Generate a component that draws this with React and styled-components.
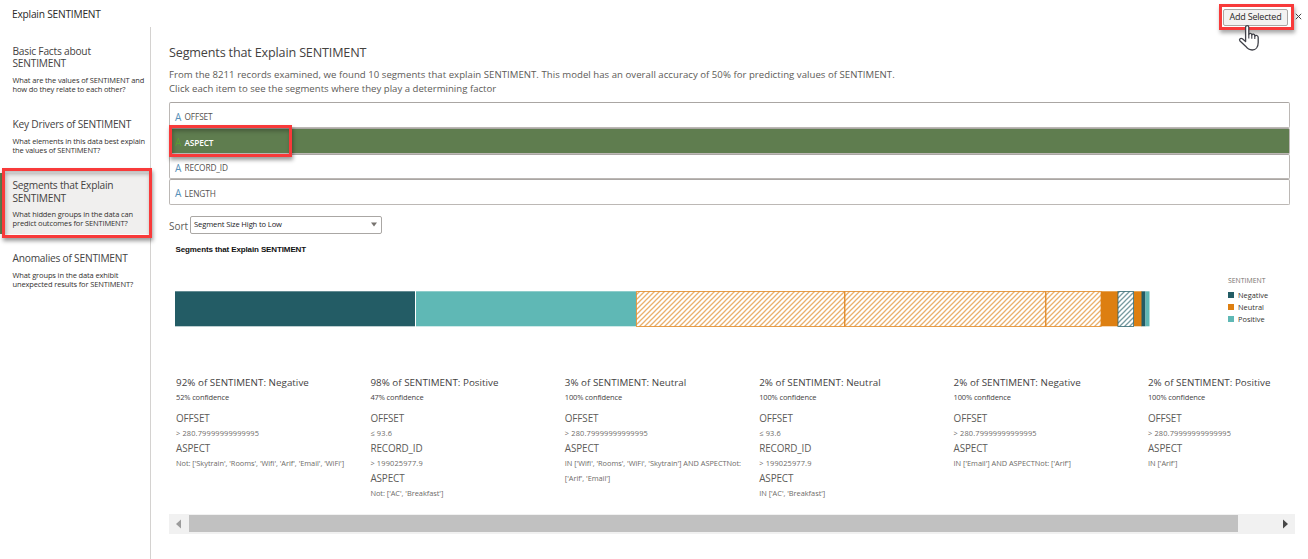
import React from "react";
import styled, { createGlobalStyle, css } from "styled-components";

const Global = createGlobalStyle`
  * { box-sizing: border-box; }
  body { margin: 0; background: #fff; overflow: hidden; }
`;

const C = {
  negative: "#235c65",
  positive: "#5fb8b5",
  neutral: "#dd7f11",
  green: "#5f7d4f",
  ink: "#44423f",
};

const Page = styled.div`
  width: 1308px;
  height: 559px;
  display: flex;
  flex-direction: column;
  font-family: "Open Sans", "Noto Sans", sans-serif;
  color: ${C.ink};
  white-space: nowrap;
  font-kerning: none;
`;

const Header = styled.header`
  height: 27px;
  flex: none;
  display: flex;
  align-items: flex-start;
  justify-content: space-between;
  padding: 0 6px 0 12px;
`;

const PageTitle = styled.h1`
  margin: 6px 0 0;
  font-size: 10.2px;
  font-weight: 400;
  line-height: 16px;
  letter-spacing: -0.22px;
  color: #2b2927;
`;

const Actions = styled.div`
  display: flex;
  align-items: flex-start;
`;

const AddFrame = styled.div`
  position: relative;
  width: 75px;
  height: 26px;
  margin-top: 4px;
  padding: 1.5px 2px 0 1px;
  border: 3px solid #f83a3a;
  box-shadow: 1px 3px 4px rgba(0, 0, 0, 0.35);
`;

const AddButton = styled.button`
  display: block;
  width: 65px;
  height: 17px;
  padding: 0;
  border: 1px solid #aaa7a4;
  border-radius: 2px;
  background: #f3f2f1;
  font: 400 9px/14px "Open Sans", sans-serif;
  letter-spacing: -0.2px;
  color: #2b2927;
`;

const Pointer = styled.svg`
  position: absolute;
  left: 16px;
  top: 17px;
`;

const CloseIcon = styled.svg`
  margin: 13px 0 0 1px;
`;

const Body = styled.div`
  flex: 1;
  display: flex;
  min-height: 0;
`;

const Nav = styled.nav`
  width: 151px;
  flex: none;
  padding-top: 11.6px;
  border-right: 1px solid #d4d2d0;
  display: flex;
  flex-direction: column;
  gap: 12.3px;
`;

const NavItem = styled.div`
  position: relative;
  padding: 6px 0 6px 12.5px;
  ${(p) =>
    p.$active &&
    css`
      background: #f0efee;
      box-shadow: inset 2px 0 ${C.green};
    `}
`;

const NavTitle = styled.div`
  font-size: 10.2px;
  line-height: 12.6px;
  letter-spacing: -0.22px;
  white-space: pre-line;
`;

const NavText = styled.div`
  margin-top: 6px;
  font-size: 7.5px;
  line-height: 9px;
  letter-spacing: -0.13px;
  white-space: pre-line;
  color: #33312f;
`;

const Highlight = styled.div`
  position: absolute;
  left: ${(p) => p.$x}px;
  top: ${(p) => p.$y}px;
  width: ${(p) => p.$w}px;
  height: ${(p) => p.$h}px;
  border: 3px solid #f83a3a;
  z-index: 2;
  box-shadow: 1px 3px 4px rgba(0, 0, 0, 0.4), inset 1px 3px 4px rgba(0, 0, 0, 0.28);
`;

const Main = styled.main`
  flex: 1;
  min-width: 0;
  padding: 17px 13px 0 18px;
`;

const Heading = styled.h2`
  margin: 0;
  font-size: 12.6px;
  font-weight: 400;
  line-height: 18px;
  letter-spacing: -0.16px;
`;

const Intro = styled.p`
  margin: 5.5px 0 0;
  font-size: 9.6px;
  line-height: 14px;
  color: #5d5b58;
`;

const IntroLine = styled.span`
  display: block;
  letter-spacing: ${(p) => p.$ls}px;
`;

const List = styled.div`
  margin-top: 6.9px;
  width: 1121px;
`;

const Row = styled.div`
  position: relative;
  height: 25.6px;
  display: flex;
  align-items: center;
  padding: 3px 0 0 5px;
  gap: 2.5px;
  border: 1px solid #bcb8b5;
  border-top-color: #aaa6a3;
  border-radius: 2px;
  font-size: 8.3px;
  color: #55524f;
  ${(p) =>
    p.$active &&
    css`
      background: ${C.green};
      color: #fff;
      font-weight: 600;
    `}
`;

const TypeMark = styled.span`
  font-size: 10px;
  font-weight: 400;
  width: 7px;
  color: ${(p) => (p.$active ? "#5b9a35" : "#5590b8")};
`;

const RowName = styled.span`
  letter-spacing: ${(p) => (p.$active ? -0.15 : -0.12)}px;
`;

const SortRow = styled.div`
  margin-top: 11px;
  height: 18px;
  display: flex;
  gap: 2px;
`;

const SortLabel = styled.label`
  width: 19px;
  font-size: 10px;
  line-height: 20px;
  color: #5d5b58;
`;

const Select = styled.div`
  width: 192px;
  height: 18px;
  padding: 0 4px 1px 3px;
  display: flex;
  align-items: center;
  justify-content: space-between;
  border: 1px solid #aaa7a4;
  border-radius: 2px;
  font-size: 7.6px;
  letter-spacing: -0.13px;
  color: #22201e;
`;

const ChartTitle = styled.div`
  margin: 10px 0 0 6.5px;
  font: 700 8px/12px "Liberation Sans", Arial, sans-serif;
  letter-spacing: -0.12px;
  color: #111;
`;

const ChartRow = styled.div`
  display: flex;
  height: 98px;
  padding-left: 6px;
`;

const Bar = styled.svg`
  flex: none;
  margin-top: 35px;
`;

const Legend = styled.div`
  margin: 20.5px 0 0 77px;
  font-size: 7.4px;
  color: #33312f;
`;

const LegendTitle = styled.div`
  line-height: 10px;
  height: 13px;
  font-size: 6.9px;
  color: #77736f;
`;

const LegendItem = styled.div`
  display: flex;
  align-items: center;
  height: 12px;
  gap: 4px;
`;

const Swatch = styled.i`
  width: 6px;
  height: 6px;
  background: ${(p) => p.$color};
`;

const Cards = styled.div`
  margin: 22px 0 0 7px;
  height: 138px;
  display: grid;
  grid-template-columns: repeat(6, 194.4px);
`;

const Card = styled.section`
  min-width: 0;
`;

const CardTitle = styled.div`
  font-size: 9.8px;
  line-height: 14px;
  letter-spacing: 0.03px;
`;

const Confidence = styled.div`
  margin-bottom: 6px;
  font-size: 7.5px;
  line-height: 15px;
  letter-spacing: -0.14px;
`;

const Field = styled.div`
  font-size: 9.9px;
  line-height: 15px;
  letter-spacing: -0.1px;
  color: #5d5b58;
`;

const Value = styled.div`
  font-size: 7.4px;
  line-height: 15px;
  letter-spacing: ${(p) => (p.$numeric ? 0.16 : -0.03)}px;
  white-space: pre-line;
  color: #6e6b68;
`;

const Scrollbar = styled.div`
  width: 1126px;
  height: 20px;
  display: flex;
  align-items: center;
  background: #f1f1f1;
`;

const ScrollArrow = styled.svg`
  flex: none;
`;

const Thumb = styled.div`
  width: 1048.5px;
  height: 17px;
  background: #c1c1c1;
`;

const NAV = [
  { t: "Basic Facts about\nSENTIMENT", d: "What are the values of SENTIMENT and\nhow do they relate to each other?" },
  { t: "Key Drivers of SENTIMENT", d: "What elements in this data best explain\nthe values of SENTIMENT?" },
  { t: "Segments that Explain\nSENTIMENT", d: "What hidden groups in the data can\npredict outcomes for SENTIMENT?", active: true },
  { t: "Anomalies of SENTIMENT", d: "What groups in the data exhibit\nunexpected results for SENTIMENT?" },
];

const ROWS = ["OFFSET", "ASPECT", "RECORD_ID", "LENGTH"];

const SEGMENTS = [
  { x: 0, w: 240, c: C.negative },
  { x: 241, w: 220, c: C.positive },
  { x: 461, w: 208.5, c: C.neutral, hatch: "hatchNeutral" },
  { x: 669.5, w: 201, c: C.neutral, hatch: "hatchNeutral" },
  { x: 870.5, w: 55.5, c: C.neutral, hatch: "hatchNeutral" },
  { x: 926, w: 17, c: C.neutral },
  { x: 942.5, w: 16, c: C.negative, hatch: "hatchNegative" },
  { x: 959, w: 8, c: C.neutral },
  { x: 966.5, w: 4, c: C.negative },
  { x: 970.5, w: 4, c: C.positive },
];

const LONG = "> 280.79999999999995";
const CARDS = [
  ["92% of SENTIMENT: Negative", "52% confidence", ["OFFSET", LONG], ["ASPECT", "Not: ['Skytrain', 'Rooms', 'Wifi', 'Arif', 'Email', 'WiFi']"]],
  ["98% of SENTIMENT: Positive", "47% confidence", ["OFFSET", "≤ 93.6"], ["RECORD_ID", "> 199025977.9"], ["ASPECT", "Not: ['AC', 'Breakfast']"]],
  ["3% of SENTIMENT: Neutral", "100% confidence", ["OFFSET", LONG], ["ASPECT", "IN ['Wifi', 'Rooms', 'WiFi', 'Skytrain'] AND ASPECTNot:\n['Arif', 'Email']"]],
  ["2% of SENTIMENT: Neutral", "100% confidence", ["OFFSET", "≤ 93.6"], ["RECORD_ID", "> 199025977.9"], ["ASPECT", "IN ['AC', 'Breakfast']"]],
  ["2% of SENTIMENT: Negative", "100% confidence", ["OFFSET", LONG], ["ASPECT", "IN ['Email'] AND ASPECTNot: ['Arif']"]],
  ["2% of SENTIMENT: Positive", "100% confidence", ["OFFSET", LONG], ["ASPECT", "IN ['Arif']"]],
];

function Hatch({ id, color }) {
  return (
    <pattern id={id} width="5" height="5" patternUnits="userSpaceOnUse">
      <path d="M-1 6L6 -1M-1 1L1 -1M4 6L6 4" stroke={color} strokeWidth="1.3" opacity="0.62" />
    </pattern>
  );
}

function SegmentBar() {
  return (
    <Bar width="976" height="36">
      <defs>
        <Hatch id="hatchNeutral" color={C.neutral} />
        <Hatch id="hatchNegative" color={C.negative} />
      </defs>
      {SEGMENTS.map((s) =>
        s.hatch ? (
          <rect key={s.x} x={s.x + 0.5} y="0.5" width={s.w - 0.5} height="35" fill={`url(#${s.hatch})`} stroke={s.c} strokeOpacity="0.75" />
        ) : (
          <rect key={s.x} x={s.x} y="0.3" width={s.w} height="35" fill={s.c} />
        )
      )}
    </Bar>
  );
}

export default function App() {
  return (
    <Page>
      <Global />
      <Header>
        <PageTitle>Explain SENTIMENT</PageTitle>
        <Actions>
          <AddFrame>
            <AddButton>Add Selected</AddButton>
            <Pointer width="24" height="28" viewBox="0 0 24 28">
              <path
                d="M7.6 17.5V3.2C7.6 1 10.8 1 10.8 3.2V10.5C11.2 8.8 13.8 9 13.8 11C14.5 9.6 16.8 10 16.8 12C17.8 10.8 20.2 11.4 20.2 13.5V18.5C20.2 23 17.8 26 14.2 26C11 26 9.4 24.8 7.6 22.2L2 17C.6 15.2 2.8 13.6 4.4 14.8Z"
                fill="#fff"
                stroke="#3f4048"
                strokeWidth="1.3"
                strokeLinejoin="round"
              />
              <path d="M10.8 10.5V14.5M13.8 11V14.7M16.8 12V15" stroke="#3f4048" strokeWidth="1.1" />
            </Pointer>
          </AddFrame>
          <CloseIcon width="7" height="7" viewBox="0 0 7 7">
            <path d="M.8 .8L6.2 6.2M6.2 .8L.8 6.2" stroke="#444" strokeWidth="1" />
          </CloseIcon>
        </Actions>
      </Header>
      <Body>
        <Nav>
          {NAV.map((n) => (
            <NavItem key={n.t} $active={n.active}>
              <NavTitle>{n.t}</NavTitle>
              <NavText>{n.d}</NavText>
              {n.active && <Highlight $x={2} $y={-5} $w={150} $h={70.5} />}
            </NavItem>
          ))}
        </Nav>
        <Main>
          <Heading>Segments that Explain SENTIMENT</Heading>
          <Intro>
            <IntroLine $ls={0.036}>
              From the 8211 records examined, we found 10 segments that explain SENTIMENT. This model has an overall accuracy of 50% for predicting values of SENTIMENT.
            </IntroLine>
            <IntroLine $ls={0.01}>Click each item to see the segments where they play a determining factor</IntroLine>
          </Intro>
          <List>
            {ROWS.map((r) => {
              const on = r === "ASPECT";
              return (
                <Row key={r} $active={on}>
                  <TypeMark $active={on}>A</TypeMark>
                  <RowName $active={on}>{r}</RowName>
                  {on && <Highlight $x={-1} $y={-4} $w={123} $h={32} />}
                </Row>
              );
            })}
          </List>
          <SortRow>
            <SortLabel>Sort</SortLabel>
            <Select>
              Segment Size High to Low
              <svg width="6" height="5" viewBox="0 0 6 5">
                <path d="M0 .5H6L3 4.5Z" fill="#77736f" />
              </svg>
            </Select>
          </SortRow>
          <ChartTitle>Segments that Explain SENTIMENT</ChartTitle>
          <ChartRow>
            <SegmentBar />
            <Legend>
              <LegendTitle>SENTIMENT</LegendTitle>
              <LegendItem><Swatch $color={C.negative} />Negative</LegendItem>
              <LegendItem><Swatch $color={C.neutral} />Neutral</LegendItem>
              <LegendItem><Swatch $color={C.positive} />Positive</LegendItem>
            </Legend>
          </ChartRow>
          <Cards>
            {CARDS.map(([title, conf, ...fields], i) => (
              <Card key={i}>
                <CardTitle>{title}</CardTitle>
                <Confidence>{conf}</Confidence>
                {fields.map(([name, value]) => (
                  <React.Fragment key={name}>
                    <Field>{name}</Field>
                    <Value $numeric={name !== "ASPECT"}>{value}</Value>
                  </React.Fragment>
                ))}
              </Card>
            ))}
          </Cards>
          <Scrollbar>
            <ScrollArrow width="20" height="20"><path d="M12 5.5V14.5L7 10Z" fill="#9c9c9c" /></ScrollArrow>
            <Thumb />
            <ScrollArrow width="57" height="20"><path d="M45 5.5V14.5L50 10Z" fill="#484848" /></ScrollArrow>
          </Scrollbar>
        </Main>
      </Body>
    </Page>
  );
}
